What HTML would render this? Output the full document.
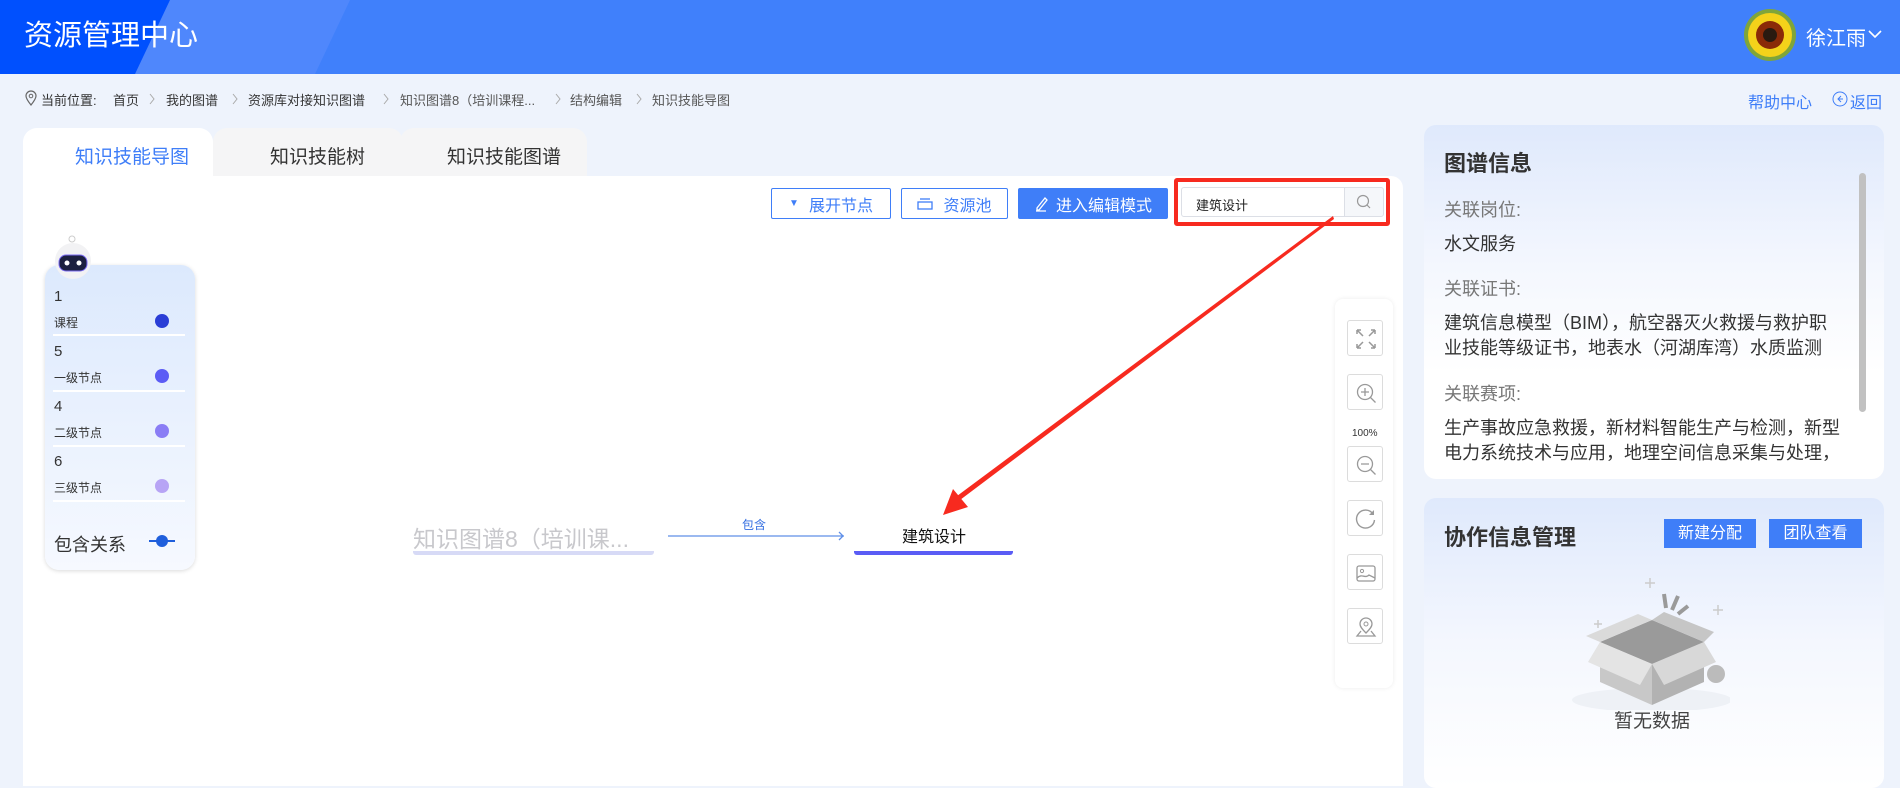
<!DOCTYPE html>
<html><head><meta charset="utf-8">
<style>
*{margin:0;padding:0;box-sizing:border-box}
body{width:1900px;height:775px;overflow:hidden;background:#eef3fc;font-family:"Liberation Sans","Noto Sans CJK SC",sans-serif;position:relative;color:#333}
.a{position:absolute;white-space:nowrap}
.bc{position:absolute;top:90px;font-size:13px;color:#333;white-space:nowrap}
.bs{position:absolute;top:93px}
.btn{position:absolute;border:1px solid #3f7ef8;border-radius:2px;color:#3f7ef8;font-size:16px;display:flex;align-items:center;justify-content:center;background:#fff}
.tb{position:absolute;left:1347px;width:36px;height:36px;border:1px solid #dcdcdc;border-radius:3px;background:#fff}
.tb svg{position:absolute;left:7px;top:7px}
.lg{position:absolute;left:54px;font-size:12px;color:#333}
.sep{position:absolute;left:53px;width:132px;height:2px;background:#fff}
.dot{position:absolute;left:155px;width:14px;height:14px;border-radius:50%}
</style></head><body>
<svg class="a" style="left:0;top:0" width="1900" height="74">
<rect width="1900" height="74" fill="#4080fb"/>
<polygon points="0,0 350,0 315,74 0,74" fill="#4f87fc"/>
<polygon points="0,0 170,0 135,74 0,74" fill="#0050fe"/>
</svg>
<div class="a" style="left:24px;top:17px;font-size:29px;color:#fff;line-height:38px">资源管理中心</div>
<svg class="a" style="left:1744px;top:9px" width="52" height="52"><defs><clipPath id="c"><circle cx="26" cy="26" r="26"/></clipPath></defs><g clip-path="url(#c)"><rect width="52" height="52" fill="#7fa53a"/><circle cx="26" cy="26" r="22" fill="#f4d21a"/><circle cx="26" cy="26" r="14" fill="#8a2a08"/><circle cx="26" cy="26" r="7" fill="#2a1a10"/></g></svg>
<div class="a" style="left:1806px;top:22px;font-size:20px;color:#fff">徐江雨</div>
<svg class="a" style="left:1868px;top:29px" width="14" height="10"><path d="M1 2l6 6 6-6" stroke="#fff" stroke-width="1.6" fill="none"/></svg>

<svg class="a" style="left:25px;top:90px" width="12" height="16"><path d="M6 15C2 10 1 8 1 6a5 5 0 0110 0c0 2-1 4-5 9z" fill="none" stroke="#666" stroke-width="1.2"/><circle cx="6" cy="6" r="1.8" fill="none" stroke="#666"/></svg>
<div class="bc" style="left:41px">当前位置:</div>
<div class="bc" style="left:113px">首页</div>
<div class="bc" style="left:166px">我的图谱</div>
<div class="bc" style="left:248px">资源库对接知识图谱</div>
<div class="bc" style="left:400px;color:#555">知识图谱8（培训课程...</div>
<div class="bc" style="left:570px;color:#555">结构编辑</div>
<div class="bc" style="left:652px;color:#555">知识技能导图</div>
<svg class="bs" style="left:148px" width="8" height="12"><path d="M2 1l4 5-4 5" stroke="#aaa" fill="none"/></svg>
<svg class="bs" style="left:231px" width="8" height="12"><path d="M2 1l4 5-4 5" stroke="#aaa" fill="none"/></svg>
<svg class="bs" style="left:382px" width="8" height="12"><path d="M2 1l4 5-4 5" stroke="#aaa" fill="none"/></svg>
<svg class="bs" style="left:554px" width="8" height="12"><path d="M2 1l4 5-4 5" stroke="#aaa" fill="none"/></svg>
<svg class="bs" style="left:635px" width="8" height="12"><path d="M2 1l4 5-4 5" stroke="#aaa" fill="none"/></svg>
<div class="a" style="left:1748px;top:89px;font-size:16px;color:#3f7ef8">帮助中心</div>
<svg class="a" style="left:1832px;top:91px" width="16" height="16"><circle cx="8" cy="8" r="7" fill="none" stroke="#3f7ef8"/><path d="M9 5L6 8l3 3M6 8h5" fill="none" stroke="#3f7ef8"/></svg>
<div class="a" style="left:1850px;top:89px;font-size:16px;color:#3f7ef8">返回</div>

<div class="a" style="left:213px;top:128px;width:190px;height:50px;background:#f5f5f6;border-radius:14px 14px 0 0"></div>
<div class="a" style="left:400px;top:128px;width:187px;height:50px;background:#f5f5f6;border-radius:14px 14px 0 0"></div>
<div class="a" style="left:23px;top:128px;width:190px;height:50px;background:#fff;border-radius:14px 14px 0 0"></div>
<div class="a" style="left:75px;top:142px;font-size:19px;color:#3f7ef8">知识技能导图</div>
<div class="a" style="left:270px;top:142px;font-size:19px;color:#333">知识技能树</div>
<div class="a" style="left:447px;top:142px;font-size:19px;color:#333">知识技能图谱</div>
<div class="a" style="left:23px;top:176px;width:1380px;height:610px;background:#fff;border-radius:0 12px 0 0"></div>

<div class="btn" style="left:771px;top:188px;width:120px;height:31px"><span style="font-size:10px;margin-right:10px">▼</span>展开节点</div>
<div class="btn" style="left:901px;top:188px;width:107px;height:31px"><svg width="16" height="12" style="margin-right:10px"><rect x="1" y="4" width="14" height="7" fill="none" stroke="#3f7ef8" stroke-width="1.3"/><path d="M3 1h10" stroke="#3f7ef8" stroke-width="1.3"/></svg>资源池</div>
<div class="btn" style="left:1018px;top:188px;width:150px;height:31px;background:#3f7ef8;color:#fff"><svg width="14" height="16" style="margin-right:8px"><path d="M3 12L11 2l2 2-8 10H3zM2 15h10" fill="none" stroke="#fff" stroke-width="1.3"/></svg>进入编辑模式</div>
<div class="a" style="left:1174px;top:178px;width:216px;height:48px;border:4px solid #f72a1f;border-radius:3px"></div>
<div class="a" style="left:1181px;top:187px;width:164px;height:30px;border:1px solid #dcdfe6;border-radius:3px 0 0 3px;background:#fff;font-size:13px;color:#222;padding:7px 0 0 14px">建筑设计</div>
<div class="a" style="left:1344px;top:187px;width:40px;height:30px;border:1px solid #dcdfe6;border-radius:0 3px 3px 0;background:#f5f7fa"></div>
<svg class="a" style="left:1356px;top:194px" width="16" height="16"><circle cx="7" cy="7" r="5.5" fill="none" stroke="#999" stroke-width="1.2"/><path d="M11 11l3 3" stroke="#999" stroke-width="1.2"/></svg>

<svg class="a" style="left:0;top:0" width="1900" height="775"><polygon points="1333,216 1334,219 960,500 957,496" fill="#f72a1f"/><polygon points="943,515 953,489 968,507" fill="#f72a1f"/></svg>

<div class="a" style="left:45px;top:265px;width:150px;height:305px;border-radius:14px;background:linear-gradient(#dce9fd,#f6f9ff);box-shadow:0 1px 4px rgba(0,0,0,.15)"></div>
<svg class="a" style="left:52px;top:233px" width="42" height="50"><circle cx="21" cy="28" r="18" fill="#f2f2f4"/><rect x="7" y="22" width="28" height="16" rx="7" fill="#1c2040" stroke="#7b6cf2"/><circle cx="15" cy="30" r="2.5" fill="#fff"/><circle cx="27" cy="30" r="2.5" fill="#fff"/><circle cx="20" cy="6" r="3" fill="none" stroke="#ccc"/></svg>
<div class="lg" style="top:288px;font-size:15px">1</div><div class="lg" style="top:314px">课程</div><div class="dot" style="top:314px;background:#2a3ed6"></div><div class="sep" style="top:334px"></div>
<div class="lg" style="top:343px;font-size:15px">5</div><div class="lg" style="top:369px">一级节点</div><div class="dot" style="top:369px;background:#5b5cf5"></div><div class="sep" style="top:390px"></div>
<div class="lg" style="top:398px;font-size:15px">4</div><div class="lg" style="top:424px">二级节点</div><div class="dot" style="top:424px;background:#8a7df5"></div><div class="sep" style="top:445px"></div>
<div class="lg" style="top:453px;font-size:15px">6</div><div class="lg" style="top:479px">三级节点</div><div class="dot" style="top:479px;background:#b7a4f5"></div><div class="sep" style="top:500px"></div>
<div class="lg" style="top:531px;font-size:18px">包含关系</div>
<svg class="a" style="left:148px;top:533px" width="28" height="16"><path d="M1 8h26" stroke="#1f5fdc" stroke-width="2"/><circle cx="14" cy="8" r="6" fill="#1f5fdc"/></svg>

<div class="a" style="left:413px;top:520px;font-size:23px;color:#c8c8cc">知识图谱8（培训课...</div>
<div class="a" style="left:413px;top:551px;width:241px;height:4px;background:#d7daf6;border-radius:0 0 3px 3px"></div>
<svg class="a" style="left:666px;top:530px" width="182" height="12"><path d="M2 6h176M173 2l4 4-4 4" stroke="#5f8fe8" stroke-width="1.3" fill="none"/></svg>
<div class="a" style="left:742px;top:516px;font-size:12px;color:#2f6be0">包含</div>
<div class="a" style="left:902px;top:523px;font-size:16px;color:#111">建筑设计</div>
<div class="a" style="left:854px;top:551px;width:159px;height:4px;background:#5a5cf5;border-radius:0 0 3px 3px"></div>

<div class="a" style="left:1335px;top:299px;width:58px;height:389px;background:#fff;border-radius:8px;box-shadow:0 0 5px rgba(0,0,0,.08)"></div>
<div class="tb" style="top:320px"><svg width="22" height="22"><path d="M2 2l6 6M2 2h4M2 2v4M20 2l-6 6M20 2h-4M20 2v4M2 20l6-6M2 20h4M2 20v-4M20 20l-6-6M20 20h-4M20 20v-4" stroke="#999" stroke-width="1.5" fill="none"/></svg></div>
<div class="tb" style="top:374px"><svg width="22" height="22"><circle cx="10" cy="10" r="7.5" fill="none" stroke="#999" stroke-width="1.3"/><path d="M10 6v8M6 10h8M15.5 15.5l5 5" stroke="#999" stroke-width="1.3"/></svg></div>
<div class="a" style="left:1352px;top:428px;font-size:10px;color:#333">100%</div>
<div class="tb" style="top:446px"><svg width="22" height="22"><circle cx="10" cy="10" r="7.5" fill="none" stroke="#999" stroke-width="1.3"/><path d="M6 10h8M15.5 15.5l5 5" stroke="#999" stroke-width="1.3"/></svg></div>
<div class="tb" style="top:500px"><svg width="22" height="22"><path d="M18 6A9 9 0 1019.5 12" fill="none" stroke="#999" stroke-width="1.4"/><path d="M19 2v5h-5" fill="#999"/></svg></div>
<div class="tb" style="top:554px"><svg width="22" height="22"><rect x="2" y="4" width="18" height="15" rx="2" fill="none" stroke="#999" stroke-width="1.3"/><circle cx="7" cy="9" r="1.6" fill="none" stroke="#999"/><path d="M2 16c5-5 8 1 12-3l6 3" fill="none" stroke="#999" stroke-width="1.3"/></svg></div>
<div class="tb" style="top:608px"><svg width="22" height="22"><path d="M11 17C6 12 5 10 5 8a6 6 0 0112 0c0 2-1 4-6 9z" fill="none" stroke="#999" stroke-width="1.3"/><circle cx="11" cy="8" r="2" fill="none" stroke="#999"/><path d="M6 15l-4 5h18l-4-5" fill="none" stroke="#999" stroke-width="1.3"/></svg></div>

<div class="a" style="left:1424px;top:125px;width:460px;height:354px;border-radius:12px;background:linear-gradient(#dfe9fc,#f4f7fe 40%,#fff 70%)"></div>
<div class="a" style="left:1444px;top:146px;font-size:22px;font-weight:bold;color:#333">图谱信息</div>
<div class="a" style="left:1859px;top:173px;width:7px;height:239px;background:#c1c1c1;border-radius:4px"></div>
<div class="a" style="left:1444px;top:196px;font-size:18px;color:#777">关联岗位:</div>
<div class="a" style="left:1444px;top:230px;font-size:18px;color:#333">水文服务</div>
<div class="a" style="left:1444px;top:275px;font-size:18px;color:#777">关联证书:</div>
<div class="a" style="left:1444px;top:311px;font-size:18px;color:#333;line-height:25px">建筑信息模型（BIM），航空器灭火救援与救护职<br>业技能等级证书，地表水（河湖库湾）水质监测</div>
<div class="a" style="left:1444px;top:380px;font-size:18px;color:#777">关联赛项:</div>
<div class="a" style="left:1444px;top:416px;width:430px;height:49px;overflow:hidden;font-size:18px;color:#333;line-height:25px">生产事故应急救援，新材料智能生产与检测，新型<br>电力系统技术与应用，地理空间信息采集与处理，</div>

<div class="a" style="left:1424px;top:498px;width:460px;height:290px;border-radius:12px;background:linear-gradient(#dfe9fc,#f4f7fe 50%,#fff)"></div>
<div class="a" style="left:1444px;top:520px;font-size:22px;font-weight:bold;color:#333">协作信息管理</div>
<div class="a" style="left:1664px;top:519px;width:92px;height:29px;background:#3f7ef8;color:#fff;font-size:16px;text-align:center;line-height:29px">新建分配</div>
<div class="a" style="left:1769px;top:519px;width:93px;height:29px;background:#3f7ef8;color:#fff;font-size:16px;text-align:center;line-height:29px">团队查看</div>
<svg class="a" style="left:1560px;top:570px" width="170" height="140">
<ellipse cx="92" cy="130" rx="80" ry="12" fill="#eef1f6"/>
<polygon points="40,72 92,50 144,72 92,94" fill="#9a9a9a"/>
<polygon points="40,72 92,94 92,135 40,112" fill="#c8c8c8"/>
<polygon points="92,94 144,72 144,112 92,135" fill="#b2b2b2"/>
<polygon points="40,72 92,94 80,115 28,92" fill="#e4e4e4"/>
<polygon points="92,94 144,72 156,92 104,115" fill="#d8d8d8"/>
<polygon points="40,72 92,50 78,44 26,66" fill="#dadada"/>
<polygon points="92,50 144,72 154,62 104,42" fill="#c6c6c6"/>
<path d="M106 38l-2-14M112 40l6-14M118 44l10-8" stroke="#9a9a9a" stroke-width="4"/>
<circle cx="156" cy="104" r="9" fill="#bbb"/>
<path d="M90 8v10M85 13h10M38 50v8M34 54h8M158 35v10M153 40h10" stroke="#ccc" stroke-width="1.5"/>
</svg>
<div class="a" style="left:1614px;top:706px;font-size:19px;color:#444">暂无数据</div>
</body></html>
